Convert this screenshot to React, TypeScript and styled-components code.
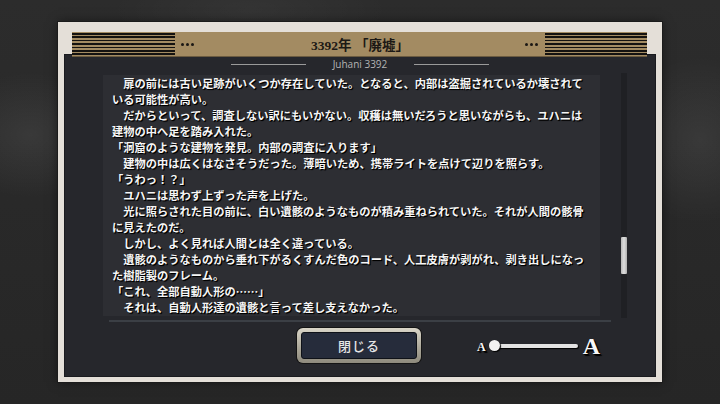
import React from "react";
import styled, { createGlobalStyle } from "styled-components";

const Global = createGlobalStyle`
  html, body { margin: 0; padding: 0; }
  body {
    width: 720px;
    height: 404px;
    overflow: hidden;
    background: #2a2a2a;
  }
`;

const Page = styled.div`
  width: 720px;
  height: 404px;
  box-sizing: border-box;
  padding: 22px 58px 22px 58px;
  background:
    radial-gradient(ellipse 120px 90px at 30px 135px, rgba(255,255,255,0.07), transparent 70%),
    radial-gradient(ellipse 110px 120px at 700px 140px, rgba(255,255,255,0.07), transparent 70%),
    radial-gradient(ellipse 200px 60px at 250px 10px, rgba(255,255,255,0.04), transparent 70%),
    linear-gradient(180deg, #2c2c2c, #262626);
  display: flex;
`;

const Frame = styled.div`
  flex: 1;
  display: flex;
  flex-direction: column;
  background: #e4dfd8;
  padding: 10px 6px 5px 6px;
  box-shadow: 0 0 0 1px #1b1b1b, 0 0 10px rgba(0,0,0,0.5);
`;

const HeaderBar = styled.div`
  position: relative;
  z-index: 1;
  height: 24px;
  margin: 0 9px -2px 8px;
  background: #a38b62;
  display: flex;
  align-items: center;
  box-shadow: 0 1px 0 #6b5b40;
`;

const Stripes = styled.div<{ $w: number }>`
  width: ${(p) => p.$w}px;
  height: 100%;
  background: repeating-linear-gradient(
    180deg,
    #a38b62 0px,
    #a38b62 1px,
    #141210 1px,
    #141210 2.5px,
    #a38b62 2.5px,
    #a38b62 3.4px
  );
`;

const Dots = styled.div`
  display: flex;
  gap: 2px;
  margin: 0 7px 0 6px;
  span {
    width: 3px;
    height: 3px;
    border-radius: 50%;
    background: #1a1714;
  }
`;

const Title = styled.div`
  flex: 1;
  text-align: center;
  font-family: "Liberation Serif", "Noto Sans CJK JP", serif;
  font-weight: 700;
  font-size: 13.5px;
  color: #1c1915;
`;

const Panel = styled.div`
  flex: 1;
  background: #26272c;
  display: flex;
  flex-direction: column;
  box-shadow: inset 0 0 0 1px #1a1b1f;
  min-height: 0;
`;

const Subtitle = styled.div`
  height: 14px;
  margin-top: 3px;
  display: flex;
  align-items: center;
  justify-content: center;
  gap: 27px;
  font-family: "Open Sans", "Noto Sans", sans-serif;
  font-size: 10px;
  color: #b4b4b4;
`;

const Rule = styled.div`
  width: 75px;
  height: 1px;
  background: #9a9a9a;
`;

const Content = styled.div`
  display: flex;
  align-items: center;
  margin: 0 0 0 39px;
  height: 248px;
  gap: 21px;
`;

const TextPanel = styled.div`
  width: 497px;
  height: 241px;
  box-sizing: border-box;
  padding: 0 0 0 9px;
  background: #2d2e33;
  overflow: hidden;
`;

const Story = styled.div`
  width: calc(42em + 0.6px);
  font-family: "Noto Sans CJK JP", sans-serif;
  font-size: 11.25px;
  line-height: 16px;
  font-weight: 700;
  color: #f6f6f6;
  text-shadow: 1px 1px 0 #000, 1px 1px 1px #000;
  p {
    margin: 0;
  }
`;

const ScrollTrack = styled.div`
  position: relative;
  width: 6px;
  height: 245px;
  background: #1f2024;
`;

const ScrollThumb = styled.div`
  position: absolute;
  left: 0;
  width: 6px;
  background: linear-gradient(90deg, #b8b8b8, #dedede 50%, #b0b0b0);
  border-radius: 1px;
`;

const Separator = styled.div`
  margin: 1px auto 0;
  width: 502px;
  height: 2px;
  background: #3b3f45;
`;

const Bottom = styled.div`
  display: grid;
  grid-template-columns: 1fr auto 1fr;
  align-items: center;
  margin-top: 6px;
`;

const CloseButton = styled.button`
  grid-column: 2;
  width: 124px;
  height: 35px;
  margin-left: -2px;
  padding: 4px;
  box-sizing: border-box;
  border: none;
  border-radius: 6px;
  background: linear-gradient(180deg, #d9d5c8, #a9a597 60%, #8e8a7d);
  box-shadow: 0 0 0 1px #141414;
  display: flex;
  cursor: pointer;
`;

const ButtonFace = styled.span`
  flex: 1;
  display: flex;
  align-items: center;
  justify-content: center;
  background: #262c3b;
  border: 1px solid #0f1218;
  border-radius: 3px;
  font-family: "Noto Sans CJK JP", sans-serif;
  font-weight: 500;
  font-size: 13px;
  color: #e6e6e6;
  letter-spacing: 1px;
`;

const SliderWrap = styled.div`
  grid-column: 3;
  display: flex;
  align-items: center;
  margin-left: 56px;
  font-family: "Liberation Serif", serif;
  font-weight: 700;
  color: #f8f8f8;
  text-shadow: 1px 1px 0 #000, 2px 2px 1px #000;
`;

const SmallA = styled.span`
  font-size: 12px;
  line-height: 12px;
  margin-top: 2px;
`;

const BigA = styled.span`
  font-size: 24px;
  line-height: 24px;
  margin-left: 5px;
`;

const Track = styled.div`
  position: relative;
  width: 84px;
  height: 4px;
  margin-left: 8px;
  border-radius: 2px;
  background: #e2e2e2;
  box-shadow: 1px 1px 1px #000;
`;

const Knob = styled.div`
  position: absolute;
  left: -5px;
  top: -4px;
  width: 11px;
  height: 11px;
  border-radius: 50%;
  background: #f2f2f2;
  box-shadow: 1px 1px 1px #000;
`;

const paragraphs = [
  "　扉の前には古い足跡がいくつか存在していた。となると、内部は盗掘されているか壊されている可能性が高い。",
  "　だからといって、調査しない訳にもいかない。収穫は無いだろうと思いながらも、ユハニは建物の中へ足を踏み入れた。",
  "「洞窟のような建物を発見。内部の調査に入ります」",
  "　建物の中は広くはなさそうだった。薄暗いため、携帯ライトを点けて辺りを照らす。",
  "「うわっ！？」",
  "　ユハニは思わず上ずった声を上げた。",
  "　光に照らされた目の前に、白い遺骸のようなものが積み重ねられていた。それが人間の骸骨に見えたのだ。",
  "　しかし、よく見れば人間とは全く違っている。",
  "　遺骸のようなものから垂れ下がるくすんだ色のコード、人工皮膚が剥がれ、剥き出しになった樹脂製のフレーム。",
  "「これ、全部自動人形の……」",
  "　それは、自動人形達の遺骸と言って差し支えなかった。",
];

const DotGroup = () => (
  <Dots>
    <span />
    <span />
    <span />
  </Dots>
);

export default function App() {
  return (
    <>
      <Global />
      <Page>
        <Frame>
          <HeaderBar>
            <Stripes $w={103} />
            <DotGroup />
            <Title>3392年 「廃墟」</Title>
            <DotGroup />
            <Stripes $w={102} />
          </HeaderBar>
          <Panel>
            <Subtitle>
              <Rule />
              <span>Juhani 3392</span>
              <Rule />
            </Subtitle>
            <Content>
              <TextPanel>
                <Story>
                  {paragraphs.map((t, i) => (
                    <p key={i}>{t}</p>
                  ))}
                </Story>
              </TextPanel>
              <ScrollTrack>
                <ScrollThumb style={{ top: 164, height: 37 }} />
              </ScrollTrack>
            </Content>
            <Separator />
            <Bottom>
              <CloseButton>
                <ButtonFace>閉じる</ButtonFace>
              </CloseButton>
              <SliderWrap>
                <SmallA>A</SmallA>
                <Track>
                  <Knob />
                </Track>
                <BigA>A</BigA>
              </SliderWrap>
            </Bottom>
          </Panel>
        </Frame>
      </Page>
    </>
  );
}
